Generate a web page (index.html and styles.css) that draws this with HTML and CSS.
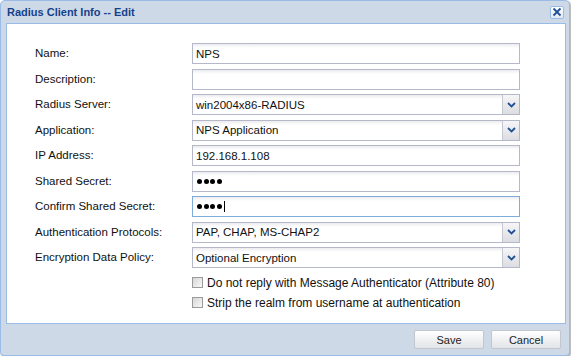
FILE: index.html
```html
<!DOCTYPE html>
<html>
<head>
<meta charset="utf-8">
<link rel="stylesheet" href="styles.css">
</head>
<body>
<div class="window">
  <div class="header">
    <span class="title">Radius Client Info -- Edit</span>
    <span class="close"><svg width="10" height="10" viewBox="0 0 10 10"><path d="M1.5 1.5 L8.5 8.5 M8.5 1.5 L1.5 8.5" stroke="#1f4f95" stroke-width="1.8" fill="none"/></svg></span>
  </div>
  <div class="panel">
    <div class="row"><div class="label">Name:</div><div class="field"><span class="val">NPS</span></div></div>
    <div class="row"><div class="label">Description:</div><div class="field"><span class="val"></span></div></div>
    <div class="row"><div class="label">Radius Server:</div><div class="field combo"><span class="val">win2004x86-RADIUS</span><span class="trigger"><svg width="9" height="6" viewBox="0 0 9 6"><path d="M1 1 L4.5 4.5 L8 1" stroke="#1f4f95" stroke-width="1.8" fill="none"/></svg></span></div></div>
    <div class="row"><div class="label">Application:</div><div class="field combo"><span class="val">NPS Application</span><span class="trigger"><svg width="9" height="6" viewBox="0 0 9 6"><path d="M1 1 L4.5 4.5 L8 1" stroke="#1f4f95" stroke-width="1.8" fill="none"/></svg></span></div></div>
    <div class="row"><div class="label">IP Address:</div><div class="field"><span class="val">192.168.1.108</span></div></div>
    <div class="row"><div class="label">Shared Secret:</div><div class="field"><span class="val dots"><i></i><i></i><i></i><i></i></span></div></div>
    <div class="row"><div class="label">Confirm Shared Secret:</div><div class="field focus"><span class="val dots"><i></i><i></i><i></i><i></i><b class="caret"></b></span></div></div>
    <div class="row"><div class="label">Authentication Protocols:</div><div class="field combo"><span class="val">PAP, CHAP, MS-CHAP2</span><span class="trigger"><svg width="9" height="6" viewBox="0 0 9 6"><path d="M1 1 L4.5 4.5 L8 1" stroke="#1f4f95" stroke-width="1.8" fill="none"/></svg></span></div></div>
    <div class="row"><div class="label">Encryption Data Policy:</div><div class="field combo"><span class="val">Optional Encryption</span><span class="trigger"><svg width="9" height="6" viewBox="0 0 9 6"><path d="M1 1 L4.5 4.5 L8 1" stroke="#1f4f95" stroke-width="1.8" fill="none"/></svg></span></div></div>
    <div class="check"><span class="box"></span><span>Do not reply with Message Authenticator (Attribute 80)</span></div>
    <div class="check"><span class="box"></span><span>Strip the realm from username at authentication</span></div>
  </div>
  <div class="footer">
    <span class="btn">Save</span>
    <span class="btn">Cancel</span>
  </div>
</div>
</body>
</html>
```
FILE: styles.css
```css
html, body {
  margin: 0;
  padding: 0;
  background: #fff;
}
body {
  font-family: "Liberation Sans", Arial, sans-serif;
  font-size: 11.5px;
  color: #111;
}
.window {
  box-sizing: border-box;
  width: 570px;
  height: 356px;
  background: #ced9e7;
  border: 1px solid #99bbe8;
  border-radius: 5px 5px 4px 4px;
  box-shadow: 1px 1px 2px rgba(0, 0, 0, 0.35);
  display: flex;
  flex-direction: column;
}
.header {
  height: 22px;
  padding: 0 5px 0 6px;
  display: flex;
  align-items: center;
  justify-content: space-between;
}
.title {
  font-weight: bold;
  font-size: 11px;
  color: #15428b;
}
.close {
  box-sizing: border-box;
  width: 14px;
  height: 13px;
  border: 1px solid #99bbe8;
  border-radius: 2px;
  background: linear-gradient(#ffffff, #dfe8f3);
  display: flex;
  align-items: center;
  justify-content: center;
}
.panel {
  box-sizing: border-box;
  height: 301px;
  margin: 0 3px 0 5px;
  border: 1px solid #99bbe8;
  background: #fff;
  padding: 19px 0 0 28px;
}
.row {
  display: flex;
  height: 21px;
  margin-bottom: 4.5px;
}
.label {
  width: 157px;
  line-height: 21px;
}
.field {
  box-sizing: border-box;
  width: 328px;
  height: 21px;
  border: 1px solid #b5b8c8;
  background: linear-gradient(#ececef 0, #ffffff 4px);
  display: flex;
  align-items: center;
}
.field.focus {
  border-color: #7eadd9;
}
.val {
  flex: 1;
  padding-left: 3px;
  white-space: nowrap;
}
.dots {
  display: flex;
  align-items: center;
  gap: 1.5px;
  padding-left: 4px;
}
.dots i {
  display: block;
  width: 5px;
  height: 5px;
  border-radius: 50%;
  background: #000;
}
.caret {
  display: block;
  width: 1px;
  height: 11px;
  background: #000;
  margin-left: 0.5px;
}
.trigger {
  box-sizing: border-box;
  width: 17px;
  height: 19px;
  border-left: 1px solid #c5c8d2;
  background: linear-gradient(#f6f6f8, #dcdde2);
  display: flex;
  align-items: center;
  justify-content: center;
}
.check {
  display: flex;
  align-items: center;
  gap: 4px;
  height: 20px;
  padding-left: 157px;
  font-size: 12px;
}
.box {
  box-sizing: border-box;
  width: 11px;
  height: 11px;
  border: 1px solid #9a9a9a;
  background: linear-gradient(135deg, #d6d6d6, #f8f8f8);
}
.footer {
  display: flex;
  justify-content: flex-end;
  gap: 7px;
  padding: 6px 8px 0 0;
}
.btn {
  box-sizing: border-box;
  width: 70px;
  height: 19px;
  border: 1px solid #c3c6cc;
  border-radius: 2px;
  background: linear-gradient(#ffffff, #e3e4e7);
  font-size: 11px;
  color: #222;
  display: flex;
  align-items: center;
  justify-content: center;
}
```
